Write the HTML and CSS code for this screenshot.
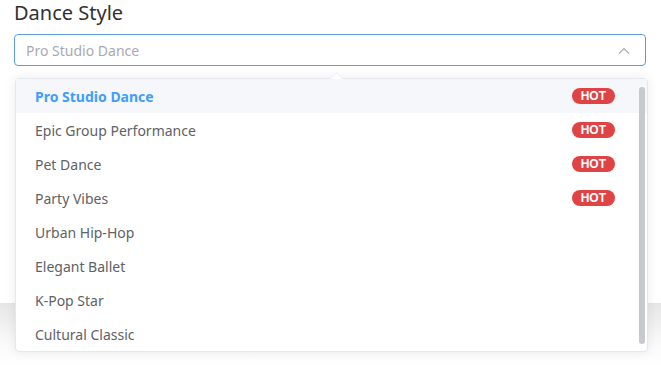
FILE: index.html
```html
<!DOCTYPE html>
<html lang="en">
  <head>
    <meta charset="UTF-8" />
    <meta name="viewport" content="width=device-width, initial-scale=1" />
    <title>Dance Style</title>
    <link rel="stylesheet" href="styles.css">
  </head>
  <body>
    <div class="form-item">
      <label class="label">Dance Style</label>
      <div class="select">
        <div class="select-input">
          <span class="placeholder">Pro Studio Dance</span>
          <svg class="arrow" width="14" height="14" viewBox="0 0 14 14">
            <path d="M2 9.5 L7 4.5 L12 9.5" fill="none" stroke="#a8abb2" stroke-width="1.1" />
          </svg>
        </div>

        <div class="dropdown">
          <span class="popper-arrow"></span>
          <ul class="options">
            <li class="option selected"><span>Pro Studio Dance</span><span class="hot">HOT</span></li>
            <li class="option"><span>Epic Group Performance</span><span class="hot">HOT</span></li>
            <li class="option"><span>Pet Dance</span><span class="hot">HOT</span></li>
            <li class="option"><span>Party Vibes</span><span class="hot">HOT</span></li>
            <li class="option"><span>Urban Hip-Hop</span></li>
            <li class="option"><span>Elegant Ballet</span></li>
            <li class="option"><span>K-Pop Star</span></li>
            <li class="option"><span>Cultural Classic</span></li>
          </ul>
          <div class="scroll-thumb"></div>
        </div>
      </div>
    </div>

    <div class="footer-bar"></div>
  </body>
</html>
```

FILE: styles.css
```css
body {
  margin: 0;
  font-family: "Noto Sans", "Open Sans", sans-serif;
  background: #fff;
  height: 370px;
  overflow: hidden;
}
.form-item {
  padding: 0 15px 0 14px;
}
.label {
  display: block;
  font-size: 20px;
  line-height: 26px;
  color: #303133;
  margin-bottom: 8px;
}
.select {
  position: relative;
}
.select-input {
  height: 30px;
  border: 1px solid #5b9fd6;
  border-radius: 4px;
  display: flex;
  align-items: center;
  justify-content: space-between;
  padding: 0 14px 0 11px;
}
.placeholder {
  font-size: 14px;
  color: #a8abb2;
}
.arrow {
  margin-top: 1px;
}
.dropdown {
  position: absolute;
  top: 44px;
  left: 1px;
  right: -2px;
  background: #fff;
  border: 1px solid #e4e7ed;
  border-radius: 4px;
  box-shadow: 0 0 12px rgba(0, 0, 0, 0.08);
  z-index: 2;
}
.popper-arrow {
  position: absolute;
  top: -5px;
  left: 316px;
  width: 8px;
  height: 8px;
  background: #fff;
  border-top: 1px solid #f0f1f4;
  border-left: 1px solid #f0f1f4;
  transform: rotate(45deg);
}
.options {
  list-style: none;
  margin: 0;
  padding: 0;
  position: relative;
}
.option {
  height: 34px;
  display: flex;
  align-items: center;
  justify-content: space-between;
  padding: 0 32px 0 19px;
  font-size: 14px;
  color: #606266;
}
.option.selected {
  background: #f5f7fa;
  color: #409eff;
  font-weight: bold;
}
.hot {
  font-family: "Liberation Sans", Arial, sans-serif;
  background: #e04343;
  color: #fff;
  font-size: 12px;
  font-weight: bold;
  line-height: 16px;
  height: 16px;
  padding: 0 9px;
  border-radius: 8px;
}
.scroll-thumb {
  position: absolute;
  top: 8px;
  bottom: 7px;
  right: 2px;
  width: 6px;
  border-radius: 3px;
  background: #c8c9cc;
}
.footer-bar {
  position: absolute;
  top: 303px;
  left: 0;
  right: 0;
  height: 67px;
  background: linear-gradient(#e6e6e6, #fafafa 60%, #fff);
  z-index: 1;
}
```
